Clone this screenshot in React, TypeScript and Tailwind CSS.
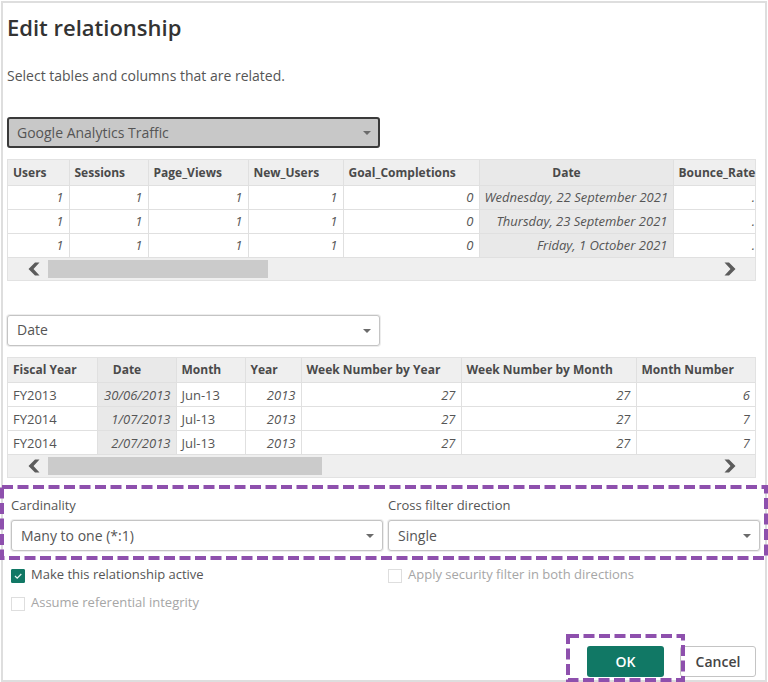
import { useState } from "react";
import type { ReactNode } from "react";
import clsx from "clsx";

interface IColumn {
  name: string;
  width: string;
  numeric?: boolean;
  selected?: boolean;
  flush?: boolean;
}

interface IPreviewTable {
  label: string;
  columns: IColumn[];
  rows: string[][];
  thumbClass: string;
}

const trafficColumns: IColumn[] = [
  { name: "Users", width: "w-[61px]", numeric: true },
  { name: "Sessions", width: "w-[79px]", numeric: true },
  { name: "Page_Views", width: "w-[100px]", numeric: true },
  { name: "New_Users", width: "w-[95px]", numeric: true },
  { name: "Goal_Completions", width: "w-[136px]", numeric: true },
  { name: "Date", width: "w-[194px]", numeric: true, selected: true },
  { name: "Bounce_Rate", width: "w-auto", numeric: true, flush: true },
];

const trafficRows = [
  ["1", "1", "1", "1", "0", "Wednesday, 22 September 2021", "."],
  ["1", "1", "1", "1", "0", "Thursday, 23 September 2021", "."],
  ["1", "1", "1", "1", "0", "Friday, 1 October 2021", "."],
];

const dateColumns: IColumn[] = [
  { name: "Fiscal Year", width: "w-auto" },
  { name: "Date", width: "w-[79px]", numeric: true, selected: true },
  { name: "Month", width: "w-[69px]" },
  { name: "Year", width: "w-[56px]", numeric: true },
  { name: "Week Number by Year", width: "w-[160px]", numeric: true },
  { name: "Week Number by Month", width: "w-[175px]", numeric: true },
  { name: "Month Number", width: "w-[119px]", numeric: true },
];

const dateRows = [
  ["FY2013", "30/06/2013", "Jun-13", "2013", "27", "27", "6"],
  ["FY2014", "1/07/2013", "Jul-13", "2013", "27", "27", "7"],
  ["FY2014", "2/07/2013", "Jul-13", "2013", "27", "27", "7"],
];

const SelectBox = (props: { id: string; label?: string; options: string[]; active?: boolean }) => (
  <div className="relative">
    <select
      id={props.id}
      aria-label={props.label}
      className={clsx(
        "block h-[31px] w-full appearance-none rounded-[3px] pr-8 text-sm text-[#555]",
        props.active
          ? "border-2 border-[#3a3a3a] bg-[#c8c8c8] pl-2"
          : "border border-[#c4c4c4] bg-white pl-[9px] shadow-[0_0_0_1px_#ededed]"
      )}
    >
      {props.options.map((option) => (
        <option key={option}>{option}</option>
      ))}
    </select>
    <svg className="pointer-events-none absolute top-[14px] right-[9px] h-1 w-2" viewBox="0 0 8 4" fill="#6b6b6b">
      <path d="M0 0h8L4 4z" />
    </svg>
  </div>
);

const PreviewTable = ({ label, columns, rows, thumbClass }: IPreviewTable) => (
  <div className="border border-[#e2e2e2] bg-[#efefef]">
    <table aria-label={label} className="w-full table-fixed border-collapse bg-white text-[13px] leading-5 text-[#555]">
      <thead>
        <tr className="h-[25px] bg-[#efefef] text-xs leading-5">
          {columns.map((column) => (
            <th
              key={column.name}
              className={clsx(
                "border-b border-[#e0e0e0] pt-px pb-0 pl-[5px] font-bold whitespace-nowrap text-[#4a4a4a] not-last:border-r",
                column.width,
                column.selected ? "bg-[#e9e9e9] pr-6 text-center" : "text-left"
              )}
            >
              {column.name}
            </th>
          ))}
        </tr>
      </thead>
      <tbody>
        {rows.map((row, rowIndex) => (
          <tr key={rowIndex} className="h-6">
            {row.map((value, i) => (
              <td
                key={columns[i].name}
                className={clsx(
                  "border-b border-[#e0e0e0] py-0 pl-[5px] whitespace-nowrap not-last:border-r",
                  columns[i].flush ? "pr-0" : "pr-[5px]",
                  columns[i].numeric && "text-right italic",
                  columns[i].selected && "bg-[#e9e9e9]"
                )}
              >
                {value}
              </td>
            ))}
          </tr>
        ))}
      </tbody>
    </table>
    <div className="flex h-[22px] items-center pr-[19px] pl-5">
      <button type="button" aria-label="Scroll left">
        <Chevron />
      </button>
      <div className="mx-2 h-[18px] flex-1">
        <div className={clsx("h-full bg-[#cbcbcb]", thumbClass)} />
      </div>
      <button type="button" aria-label="Scroll right">
        <Chevron right />
      </button>
    </div>
  </div>
);

const Chevron = ({ right }: { right?: boolean }) => (
  <svg className={clsx("block h-[14px] w-3", right && "rotate-180")} viewBox="0 0 12 14" fill="#5c5c5c">
    <path d="M7 0.5h4.5L5.500 7l6 6.500H7L0.500 7z" />
  </svg>
);

const Outline = ({ className }: { className: string }) => (
  <svg className={clsx("pointer-events-none absolute", className)} aria-hidden="true">
    <rect
      className="h-[calc(100%-4px)] w-[calc(100%-4px)]"
      x="2"
      y="2"
      fill="none"
      stroke="#8e50ad"
      strokeWidth="4"
      strokeDasharray="11 4.5"
    />
  </svg>
);

const CheckBox = (props: { children: ReactNode; checked?: boolean; disabled?: boolean }) => {
  const [checked, setChecked] = useState<boolean>(!!props.checked);

  return (
    <label className={clsx("flex h-7 items-center gap-[6px] text-[13px]", props.disabled ? "text-[#a6a6a6]" : "text-[#555]")}>
      <span className="relative mt-px">
        <input
          type="checkbox"
          checked={checked}
          disabled={props.disabled}
          onChange={() => setChecked((prev) => !prev)}
          className="block size-[14px] appearance-none border border-[#dedede] bg-white checked:rounded-[1px] checked:border-[#117865] checked:bg-[#117865]"
        />
        {checked && (
          <svg className="pointer-events-none absolute inset-0 size-[14px]" viewBox="0 0 14 14" fill="none" stroke="#e6f4f0" strokeWidth="1.300">
            <path d="M4 7l2.200 2.200L10.300 5" />
          </svg>
        )}
      </span>
      {props.children}
    </label>
  );
};

export default function App() {
  return (
    <div className="bg-white p-px font-['Open_Sans','Noto_Sans',sans-serif]">
      <main className="border-2 border-[#dedede]">
        <div className="pt-2 pr-[9px] pl-1">
          <h1 className="text-[22px] leading-8 font-semibold text-[#333]">Edit relationship</h1>
          <p className="mt-[23px] text-sm leading-5 text-[#555]">Select tables and columns that are related.</p>

          <div className="mt-[31px] w-[calc(50%-2px)]">
            <SelectBox id="from-table" label="First table" options={["Google Analytics Traffic", "Date"]} active />
          </div>
          <div className="mt-[11px]">
            <PreviewTable label="Google Analytics Traffic" columns={trafficColumns} rows={trafficRows} thumbClass="w-[33%]" />
          </div>

          <div className="mt-[34px] w-[calc(50%-2px)]">
            <SelectBox id="to-table" label="Second table" options={["Date", "Google Analytics Traffic"]} />
          </div>
          <div className="mt-[11px]">
            <PreviewTable label="Date" columns={dateColumns} rows={dateRows} thumbClass="w-[41%]" />
          </div>
        </div>

        <div className="relative mt-[7px] grid grid-cols-2 gap-x-[5px] pt-[10px] pr-[5px] pb-[9px] pl-2">
          <div>
            <label htmlFor="cardinality" className="mb-[5px] block text-[13px] leading-5 text-[#555]">
              Cardinality
            </label>
            <SelectBox id="cardinality" options={["Many to one (*:1)", "One to one (1:1)", "One to many (1:*)", "Many to many (*:*)"]} />
          </div>
          <div>
            <label htmlFor="cross-filter" className="mb-[5px] block text-[13px] leading-5 text-[#555]">
              Cross filter direction
            </label>
            <SelectBox id="cross-filter" options={["Single", "Both"]} />
          </div>
          <Outline className="top-0 -left-[3px] h-full w-[calc(100%+6px)]" />
        </div>

        <div className="grid grid-cols-2 gap-x-[5px] pt-px pr-[5px] pl-2">
          <div>
            <CheckBox checked>Make this relationship active</CheckBox>
            <CheckBox disabled>Assume referential integrity</CheckBox>
          </div>
          <CheckBox disabled>Apply security filter in both directions</CheckBox>
        </div>

        <div className="mt-[29px] flex justify-end gap-4 pr-[9px] pb-[3px]">
          <div className="relative">
            <button type="button" className="block h-[31px] w-[77px] rounded-[3px] bg-[#117865] text-sm font-semibold text-white">
              OK
            </button>
            <Outline className="-top-3 -left-[21px] z-10 h-12 w-[119px]" />
          </div>
          <button
            type="button"
            className="h-[31px] w-[76px] rounded-[3px] border border-[#c4c4c4] bg-white text-sm font-semibold text-[#444]"
          >
            Cancel
          </button>
        </div>
      </main>
    </div>
  );
}
